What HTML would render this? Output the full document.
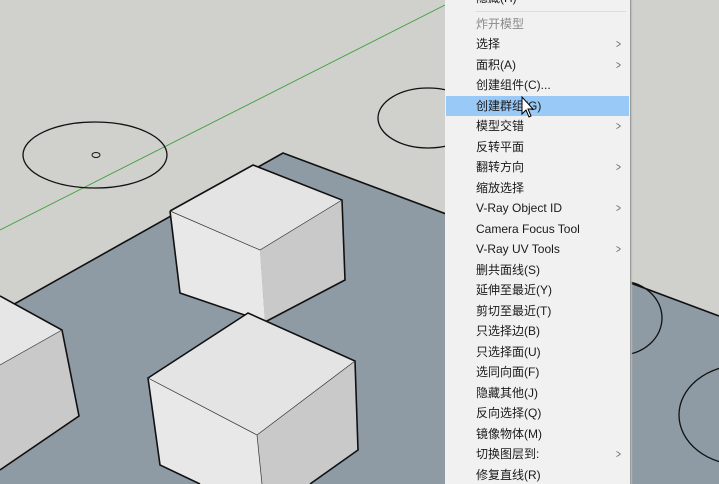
<!DOCTYPE html>
<html><head><meta charset="utf-8"><style>
html,body{margin:0;padding:0;width:719px;height:484px;overflow:hidden;background:#d0d0cc;font-family:"Liberation Sans","Microsoft YaHei","Noto Sans CJK SC",sans-serif;position:relative}
svg{position:absolute;left:0;top:0}
.menu{position:absolute;left:445px;top:-6px;width:185px;height:490px;background:#f1f1f1;border-right:1px solid #9a9a9a;box-shadow:1px 0 1px #bbb;overflow:hidden}
.it{position:absolute;left:31px;font-size:12px;color:#1a1a1a;line-height:16px;white-space:nowrap}
.ar{position:absolute;left:170px;font-size:12px;color:#666;line-height:16px;transform:scaleX(.7)}
.hl{position:absolute;left:1px;width:183px;height:20px;background:#99c9f7}
.sep{position:absolute;left:31px;width:150px;height:1px;background:#dcdcdc}
</style></head><body>
<svg width="719" height="484" viewBox="0 0 719 484">
<polygon points="283,153 719,316 719,484 0,484 0,312" fill="#8f9ba4"/>
<polyline points="0,312 283,153 719,316" fill="none" stroke="#111" stroke-width="1.6"/>
<line x1="0" y1="230" x2="445" y2="5" stroke="#3ca03c" stroke-width="0.9"/>
<ellipse cx="95" cy="155" rx="72" ry="33" fill="none" stroke="#111" stroke-width="1.3"/>
<ellipse cx="96" cy="155" rx="4" ry="2.5" fill="none" stroke="#111" stroke-width="1"/>
<ellipse cx="428" cy="118" rx="50" ry="30" fill="none" stroke="#111" stroke-width="1.3"/>
<ellipse cx="620" cy="318" rx="42" ry="37" fill="none" stroke="#111" stroke-width="1.3"/>
<ellipse cx="742" cy="415" rx="63" ry="50" fill="none" stroke="#111" stroke-width="1.3"/>
<polygon points="0,296 62,330 0,365" fill="#e6e6e6"/>
<polygon points="0,365 62,330 79,416 0,470" fill="#c9c9c9"/>
<polyline points="0,296 62,330 79,416 0,470" fill="none" stroke="#111" stroke-width="1.6"/>
<line x1="62" y1="330" x2="0" y2="365" stroke="#333" stroke-width="0.7"/>
<polygon points="253,165 342,200 260,250 170,211" fill="#e4e4e4"/>
<polygon points="170,211 260,250 265,322 180,293" fill="#e8e8e8"/>
<polygon points="260,250 342,200 345,280 265,322" fill="#c9c9c9"/>
<polyline points="170,211 253,165 342,200 345,280 265,322 180,293 170,211" fill="none" stroke="#111" stroke-width="1.6"/>
<polyline points="170,211 260,250 342,200 M260,250 265,322" fill="none" stroke="#333" stroke-width="0.7"/>
<polygon points="248,313 355,361 257,435 148,378" fill="#e4e4e4"/>
<polygon points="148,378 257,435 262,484 200,484 160,465" fill="#e8e8e8"/>
<polygon points="257,435 355,361 358,450 310,484 262,484" fill="#c9c9c9"/>
<polyline points="200,484 160,465 148,378 248,313 355,361 358,450 310,484" fill="none" stroke="#111" stroke-width="1.6"/>
<polyline points="148,378 257,435 355,361" fill="none" stroke="#333" stroke-width="0.7"/>
<line x1="257" y1="435" x2="262" y2="484" stroke="#333" stroke-width="0.7"/>
</svg>
<div class="menu">
<div class="it" style="top:-4px">隐藏(H)</div>
<div class="sep" style="top:17px"></div>
<div class="hl" style="top:102px"></div>
<div class="it" style="top:22px;color:#8a8a8a">炸开模型</div>
<div class="it" style="top:42px">选择</div><div class="ar" style="top:42px">&gt;</div>
<div class="it" style="top:63px">面积(A)</div><div class="ar" style="top:63px">&gt;</div>
<div class="it" style="top:83px">创建组件(C)...</div>
<div class="it" style="top:104px">创建群组(G)</div>
<div class="it" style="top:124px">模型交错</div><div class="ar" style="top:124px">&gt;</div>
<div class="it" style="top:145px">反转平面</div>
<div class="it" style="top:165px">翻转方向</div><div class="ar" style="top:165px">&gt;</div>
<div class="it" style="top:186px">缩放选择</div>
<div class="it" style="top:206px">V-Ray Object ID</div><div class="ar" style="top:206px">&gt;</div>
<div class="it" style="top:227px">Camera Focus Tool</div>
<div class="it" style="top:247px">V-Ray UV Tools</div><div class="ar" style="top:247px">&gt;</div>
<div class="it" style="top:268px">删共面线(S)</div>
<div class="it" style="top:288px">延伸至最近(Y)</div>
<div class="it" style="top:309px">剪切至最近(T)</div>
<div class="it" style="top:329px">只选择边(B)</div>
<div class="it" style="top:350px">只选择面(U)</div>
<div class="it" style="top:370px">选同向面(F)</div>
<div class="it" style="top:391px">隐藏其他(J)</div>
<div class="it" style="top:411px">反向选择(Q)</div>
<div class="it" style="top:432px">镜像物体(M)</div>
<div class="it" style="top:452px">切换图层到:</div><div class="ar" style="top:452px">&gt;</div>
<div class="it" style="top:473px">修复直线(R)</div>
</div>
<svg width="719" height="484" style="pointer-events:none">
<path d="M522,97 L522,114 L526,110 L529,117 L531,116 L528,109 L533,109 Z" fill="#fff" stroke="#000" stroke-width="1"/>
</svg>
</body></html>
